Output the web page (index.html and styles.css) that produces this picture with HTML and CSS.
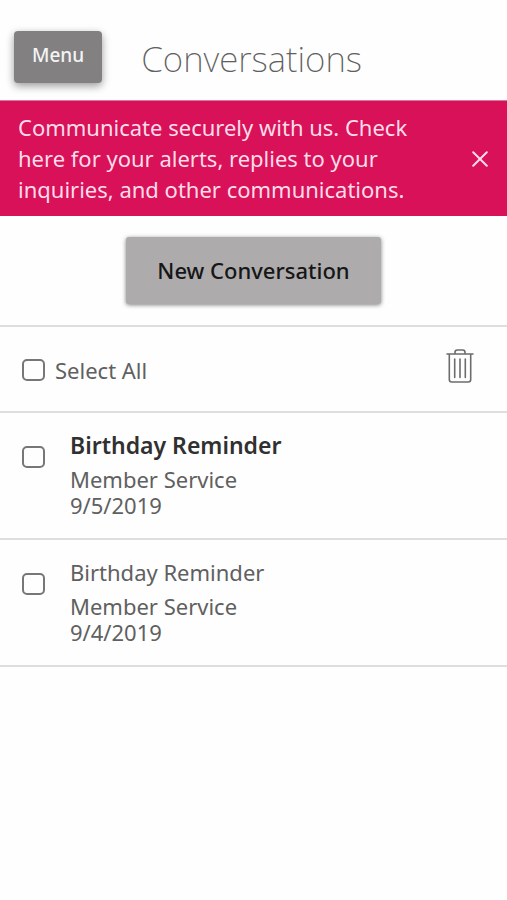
FILE: index.html
```html
<!DOCTYPE html>
<html lang="en">
<head>
<meta charset="utf-8">
<meta name="viewport" content="width=device-width, initial-scale=1">
<title>Conversations</title>
<link rel="stylesheet" href="styles.css">
</head>
<body>
<header class="header">
  <button class="menu-button" type="button">Menu</button>
  <h1 class="title">Conversations</h1>
</header>
<main>
  <section class="notice">
    <p class="notice-text">Communicate securely with us. Check here for your alerts, replies to your inquiries, and other communications.</p>
    <button class="icon-button" type="button" aria-label="Dismiss">
      <svg width="16" height="16" viewBox="0 0 16 16" fill="none" stroke="currentColor" stroke-width="2" stroke-linecap="round"><path d="M1.200 1.200l13.600 13.600M14.800 1.200L1.200 14.800"/></svg>
    </button>
  </section>
  <div class="actions">
    <button class="new-button" type="button">New Conversation</button>
  </div>
  <div class="toolbar">
    <label class="select-all"><input class="check" type="checkbox"><span>Select All</span></label>
    <button class="icon-button trash" type="button" aria-label="Delete">
      <svg width="28" height="34" viewBox="0 0 28 34" fill="none" stroke="currentColor" stroke-width="1.600" stroke-linecap="round" stroke-linejoin="round"><path d="M1 5h26M3.300 5v25.500q0 2.500 2.500 2.500h16.400q2.500 0 2.500-2.500V5M9 4.800V3.300Q9 1 11.300 1h5.400Q19 1 19 3.300v1.500M8.700 10v18.500M14 10v18.500M19.300 10v18.500"/></svg>
    </button>
  </div>
  <ul class="list">
    <li class="item">
      <input class="check" type="checkbox" id="conversation-1">
      <label class="item-body" for="conversation-1">
        <span class="subject unread">Birthday Reminder</span>
        <span>Member Service</span>
        <span>9/5/2019</span>
      </label>
    </li>
    <li class="item">
      <input class="check" type="checkbox" id="conversation-2">
      <label class="item-body" for="conversation-2">
        <span class="subject">Birthday Reminder</span>
        <span>Member Service</span>
        <span>9/4/2019</span>
      </label>
    </li>
  </ul>
</main>
</body>
</html>
```
FILE: styles.css
```css
* {
  box-sizing: border-box;
}

body {
  margin: 0;
  background: #fefefe;
  color: #606060;
  font-family: "Noto Sans", "Open Sans", sans-serif;
  font-size: 22px;
  line-height: 26px;
}

button {
  border: 0;
  font-family: inherit;
  cursor: pointer;
}

.header {
  display: flex;
  align-items: flex-start;
  gap: 39px;
  padding: 31px 14px 17px;
}

.menu-button {
  padding: 12px 18px 16px;
  border-radius: 4px;
  background: #828081;
  color: #f4f4f4;
  font-size: 19px;
  font-weight: 500;
  line-height: 24px;
  box-shadow: 0 3px 8px rgba(0, 0, 0, 0.4);
}

.title {
  margin: 4px 0 0;
  color: #606060;
  font-size: 35px;
  font-weight: 200;
  line-height: 48px;
}

.notice {
  display: flex;
  align-items: center;
  justify-content: space-between;
  gap: 16px;
  padding: 11px 19px 11px 18px;
  border-top: 1px solid #d57b9b;
  background: #d81158;
  color: #ffdce9;
}

.notice-text {
  max-width: 400px;
  margin: 0;
  line-height: 31px;
}

.icon-button {
  display: flex;
  padding: 0;
  background: transparent;
  color: inherit;
}

.actions {
  display: flex;
  justify-content: center;
  padding: 21px 14px;
}

.new-button {
  padding: 17px 31px 18px;
  border-radius: 3px;
  background: #adabac;
  color: #161616;
  font-size: 22px;
  font-weight: 500;
  line-height: 32px;
  box-shadow: 0 1px 4px rgba(0, 0, 0, 0.5);
}

.toolbar {
  display: flex;
  align-items: flex-end;
  justify-content: space-between;
  padding: 22px 33px 28px 22px;
  border-top: 2px solid #dedede;
}

.select-all {
  display: flex;
  align-items: center;
  gap: 10px;
}

.check {
  flex: none;
  width: 23px;
  height: 22px;
  margin: 0;
  border: 2px solid #777;
  border-radius: 5px;
  background: #fefefe;
  appearance: none;
}

.check:checked {
  background: #777;
}

.trash {
  color: #6c6c6c;
}

.list {
  margin: 0;
  padding: 0;
  border-bottom: 2px solid #dedede;
  list-style: none;
}

.item {
  display: flex;
  align-items: flex-start;
  gap: 25px;
  padding: 19px 22px 20px;
  border-top: 2px solid #dedede;
}

.item .check {
  margin-top: 14px;
}

.item-body {
  display: flex;
  flex-direction: column;
}

.subject {
  margin-bottom: 8px;
}

.unread {
  color: #303030;
  font-size: 23px;
  font-weight: 600;
}
```
